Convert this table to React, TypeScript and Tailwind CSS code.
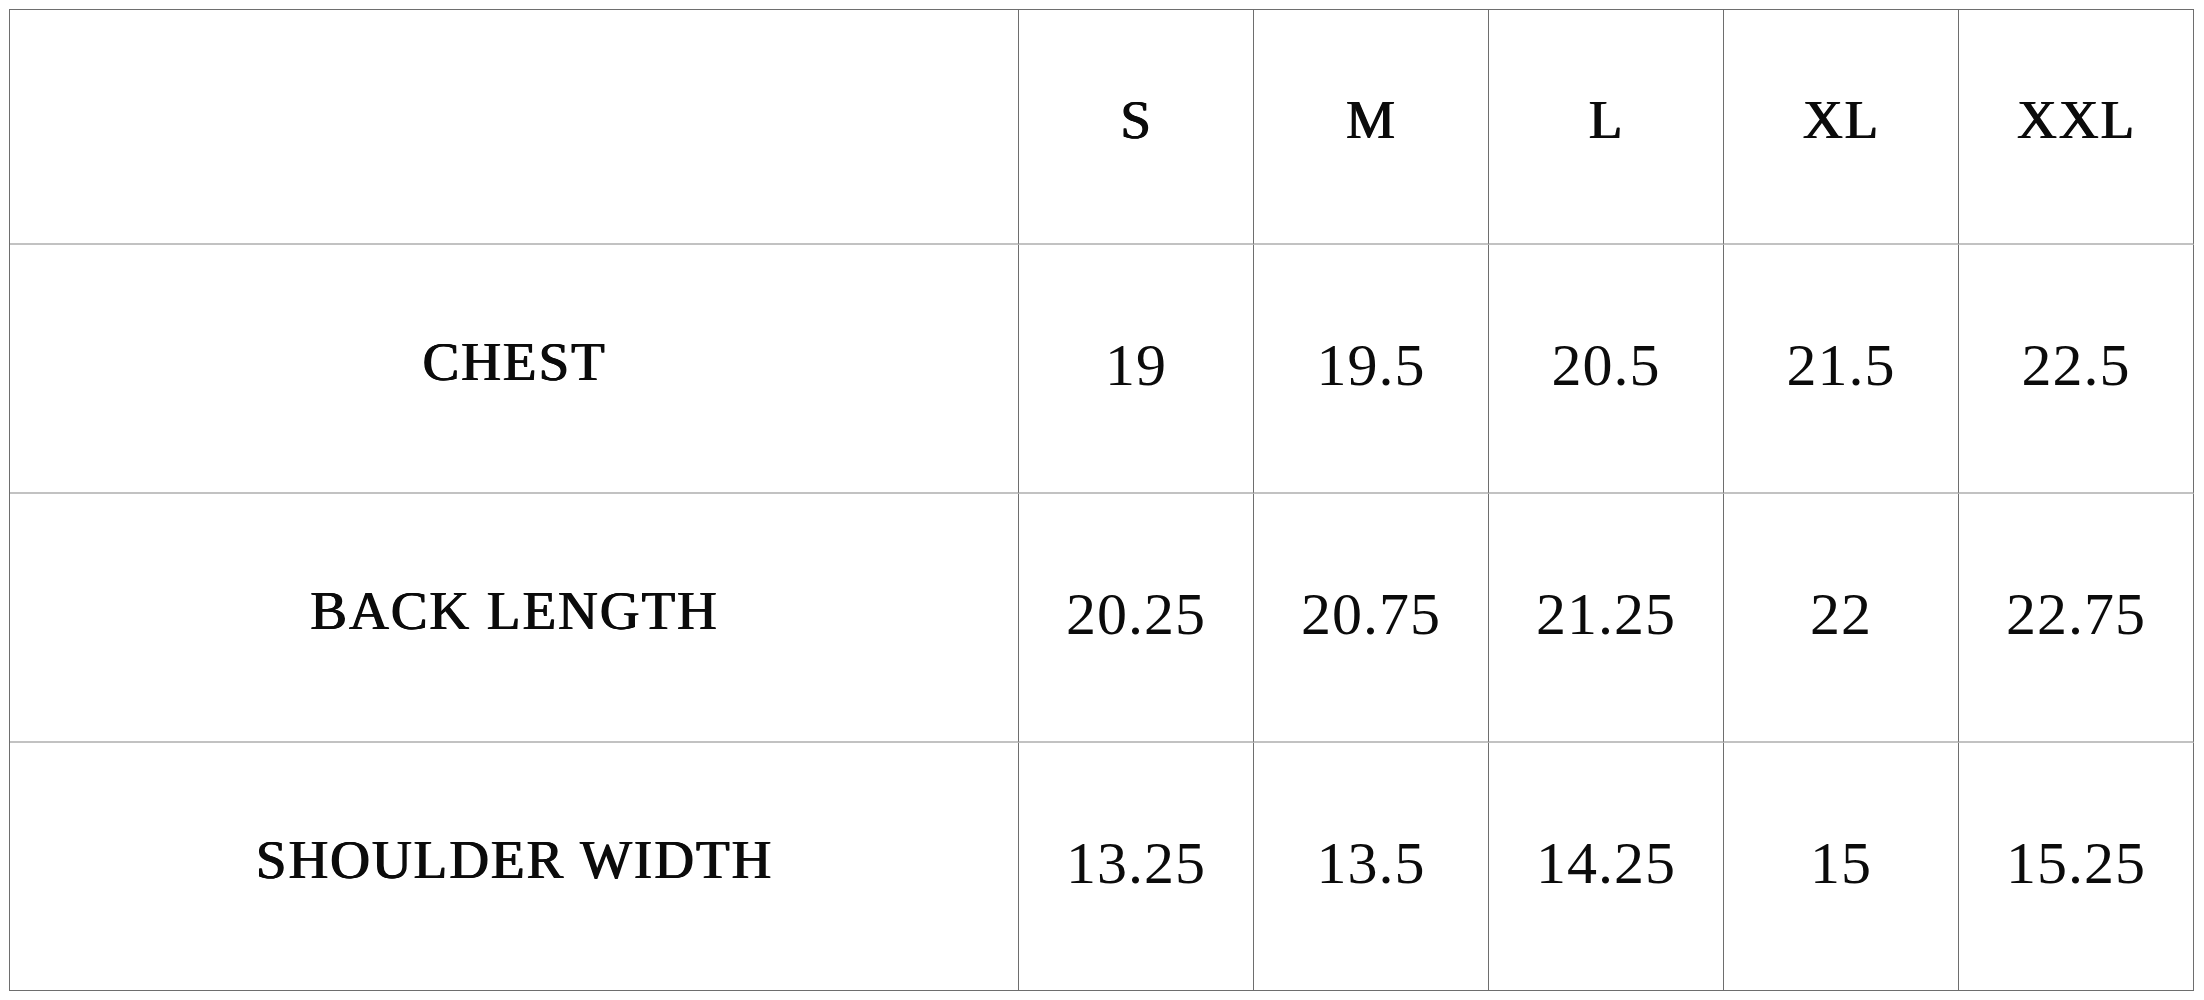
const SIZES = ['S', 'M', 'L', 'XL', 'XXL'];

const ROWS: { label: string; values: string[] }[] = [
  { label: 'CHEST', values: ['19', '19.5', '20.5', '21.5', '22.5'] },
  { label: 'BACK LENGTH', values: ['20.25', '20.75', '21.25', '22', '22.75'] },
  { label: 'SHOULDER WIDTH', values: ['13.25', '13.5', '14.25', '15', '15.25'] },
];

// Grid lines: verticals are dark, interior horizontals a lighter 2px grey.
const cell =
  'flex items-center justify-center border-r border-[#6e6e6e] pb-[12px]';
// Headings sit between regular and bold — thicken regular with a faint shadow.
const heading =
  'text-[55px] tracking-[2px] [text-shadow:1.3px_0_0_#0b0b0b,0.6px_0.4px_0_#0b0b0b]';

export default function App() {
  return (
    <div className="min-h-screen w-full bg-white pl-[9px] pt-[9px] font-['Liberation_Serif',serif] text-[#0b0b0b]">
      <div className="grid w-[2185px] grid-cols-[1009px_repeat(5,235px)] border-l border-t border-[#6e6e6e]">
        {/* header row */}
        <div className={`${cell} h-[235px] border-b-2 border-b-[#c2c2c2]`} />
        {SIZES.map((s) => (
          <div
            key={s}
            className={`${cell} ${heading} h-[235px] border-b-2 border-b-[#c2c2c2]`}
          >
            {s}
          </div>
        ))}

        {ROWS.map((row, i) => {
          const last = i === ROWS.length - 1;
          const bottom = last
            ? 'h-[248px] border-b border-b-[#6e6e6e]'
            : 'h-[249px] border-b-2 border-b-[#c2c2c2]';
          return (
            <div key={row.label} className="contents">
              <div className={`${cell} ${heading} ${bottom}`}>{row.label}</div>
              {row.values.map((v, j) => (
                <div
                  key={j}
                  className={`${cell} ${bottom} pt-[4px] text-[60px] tracking-[1px]`}
                >
                  {v}
                </div>
              ))}
            </div>
          );
        })}
      </div>
    </div>
  );
}
